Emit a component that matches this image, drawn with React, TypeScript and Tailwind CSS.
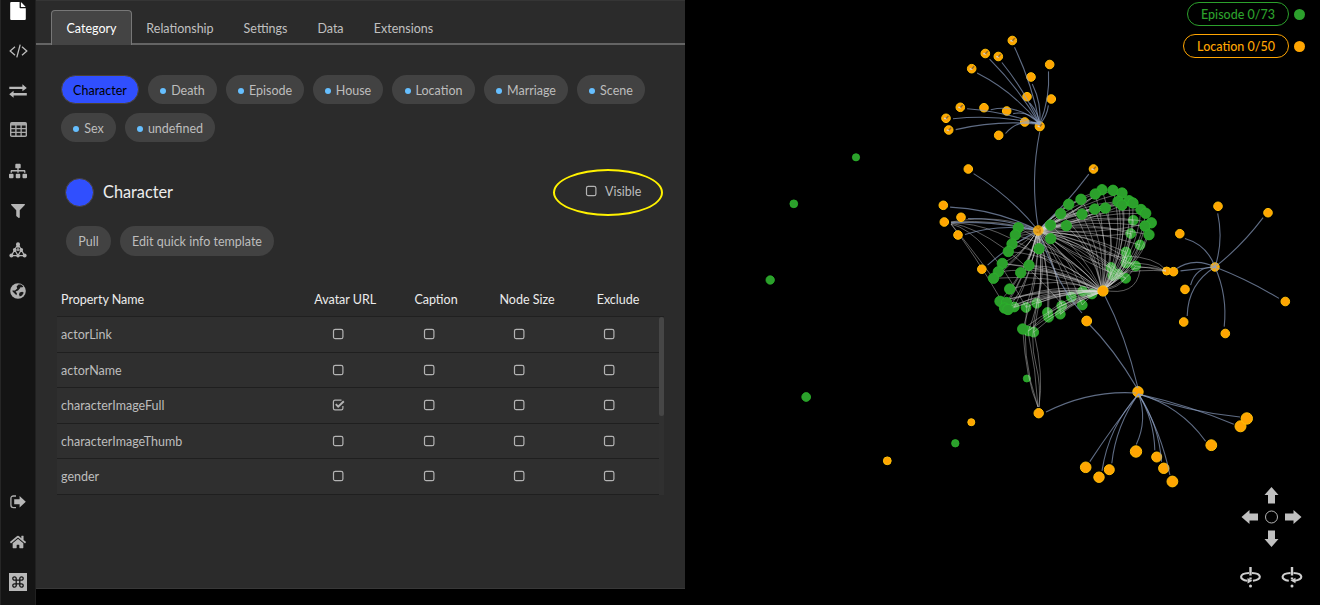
import type { ReactNode } from 'react';
import { FaFilter, FaHome, FaSitemap } from 'react-icons/fa';

type Point = [number, number];
type Node = [number, number, number];

const HUB_NORTH: Point = [1039.7, 126.3];
const HUB_A: Point = [1038.3, 230.5];
const HUB_B: Point = [1103, 291];
const HUB_EAST: Point = [1215, 267];
const HUB_SOUTH: Point = [1138, 391.8];

/* Episode nodes that sit in front of the links */
const episodesFront: Point[] = [
  [1102, 189.7], [1113, 190.3], [1122, 193], [1095.3, 194], [1081, 199.3], [1068.7, 204.3],
  [1118, 201.5], [1129, 200.7], [1133, 203], [1122, 205], [1141, 209.5], [1145.7, 213.3],
  [1151.3, 222.8], [1145, 226], [1149, 234.7], [1105.3, 208], [1094.7, 209], [1082, 214.2],
  [1060.7, 213.7], [1050.5, 225], [1066.3, 225.7], [1050.7, 238.6], [1039, 248.7],
  [1018.3, 227.8], [1015.3, 235], [1012, 244], [1008.3, 251.5], [1002.3, 263.5],
  [998.3, 271.8], [993.5, 278.3], [1029, 265.2], [1020.7, 272.7], [1009.7, 289],
  [1000, 301.3], [1006.5, 302.5], [1004.5, 308], [1008, 309.5], [1022.7, 329],
];

/* Episode nodes with links running across them */
const episodesBack: Point[] = [
  [1133.3, 220.3], [1130.7, 233.5], [1140, 245], [1126, 252], [1127, 258], [1126, 263],
  [1135.7, 266], [1111, 267.5], [1112.7, 275.5], [1118, 274], [1125.7, 278.3], [1014.3, 307],
  [1026, 307.5], [1036.7, 303.3], [1047.5, 312.5], [1048.5, 317.3], [1060.3, 314.2],
  [1061.7, 305.7], [1071.3, 297], [1082.7, 291.3], [1082.3, 305], [1092, 294],
  [1028.3, 331], [1033.7, 332.2],
];

const northLeaves: Point[] = [
  [1012.3, 40.5], [985.3, 53.5], [998.3, 56.5], [971.7, 68.7], [1049.7, 64.5], [1031, 77],
  [1027, 96.7], [1051.3, 99], [960.3, 107.3], [984, 107.7], [1006.7, 111], [946, 118.3],
  [948.7, 130], [998.7, 135.3], [1024.7, 122],
];
const northBend = [0.03, 0.03, 0.03, 0.05, 0.05, 0.06, 0.06, 0.06, 0.03, 0.12, 0.13, 0.04, 0.04, 0.14, 0.08];

const westLeaves: Point[] = [[968.3, 169], [1093.5, 169], [943.3, 205.3], [961, 217.3], [944.3, 222], [958, 235], [981.8, 269.2]];
const westBend = [0.04, 0.02, 0.05, 0.04, 0.03, 0.06, 0.03];

const eastLeaves: Point[] = [[1218, 206.3], [1268, 212.7], [1179.8, 233.7], [1173.5, 271.7], [1166.7, 271], [1185, 289.4], [1183.7, 322], [1225.3, 333.5], [1285.3, 301.5]];
const eastBend = [0.06, 0.03, 0.11, 0, 0.13, 0.16, 0.12, -0.06, -0.02];

const southLeaves: Node[] = [
  [1085.7, 467.3, 5.3], [1099, 477.2, 5.2], [1109.3, 469.7, 5], [1136, 451.5, 5.7], [1156.7, 457, 5],
  [1163.8, 468.3, 5.2], [1172.4, 481.5, 5.4], [1211.3, 445.2, 5.4], [1240.5, 426.3, 5.5], [1246.8, 418.5, 5.7],
];
const southBend = [0.01, 0.07, 0.06, -0.09, -0.06, -0.06, -0.04, -0.08, -0.02, 0.03];

const curve = (from: Point, to: Point, bend: number, gap = 0): string => {
  const dx = to[0] - from[0];
  const dy = to[1] - from[1];
  const len = Math.hypot(dx, dy) || 1;
  const ex = to[0] - (dx / len) * gap;
  const ey = to[1] - (dy / len) * gap;
  const cx = (from[0] + ex) / 2 - dy * bend * 2;
  const cy = (from[1] + ey) / 2 + dx * bend * 2;
  return `M${from[0]} ${from[1]}Q${cx.toFixed(1)} ${cy.toFixed(1)} ${ex.toFixed(1)} ${ey.toFixed(1)}`;
};

const Green = ({ x, y, r = 5.2 }: { x: number; y: number; r?: number }) => (
  <circle cx={x} cy={y} r={r} fill="#2ca02c" stroke="#2bb52b" strokeWidth="0.8" />
);
const Orange = ({ x, y, r = 4.3 }: { x: number; y: number; r?: number }) => (
  <circle cx={x} cy={y} r={r} fill="#ffa502" stroke="#ffc107" strokeWidth="1" />
);

const Arrow = ({ angle }: { angle: number }) => (
  <path
    d="M0 -30L7 -22H3.5V-13.5H-3.5V-22H-7Z"
    fill="#c0c0c0"
    transform={`translate(1271.5 517) rotate(${angle})`}
  />
);

const Rotate = ({ x, flip }: { x: number; flip?: boolean }) => (
  <g transform={`translate(${x} 577)`} stroke="#cfcfcf" fill="none">
    <path d="M0 -10V-1.5M0 0.5V2.5" strokeWidth="2.4" />
    <path d="M-3.2 3.7C-12 2.6 -11.5 -3.6 -1.5 -4M1.5 -4C11.5 -3.6 12 2.8 2.5 3.8" strokeWidth="2.1" />
    <path d={flip ? 'M-3 1L2 3.7L-3 6.4Z' : 'M3.5 0.8L-1.5 3.6L3.5 6.2Z'} fill="#cfcfcf" stroke="none" />
    <circle cx="0" cy="9" r="1.5" fill="#cfcfcf" stroke="none" />
  </g>
);

function Graph() {
  const episodes = [...episodesFront, ...episodesBack];
  return (
    <svg className="block h-[605px] w-[635px]" viewBox="685 0 635 605">
      {episodesBack.map(([x, y]) => (
        <Green key={`${x}-${y}`} x={x} y={y} r={4.9} />
      ))}
      <Green x={1026.8} y={378.5} r={3.5} />
      {northLeaves.map(([x, y]) => (
        <Orange key={`${x}-${y}`} x={x} y={y} />
      ))}
      <Orange x={HUB_NORTH[0]} y={HUB_NORTH[1]} r={4.6} />
      <Orange x={1166.7} y={271} r={4} />
      <Orange x={HUB_EAST[0]} y={HUB_EAST[1]} r={4.2} />
      <Orange x={HUB_SOUTH[0]} y={HUB_SOUTH[1]} r={5.2} />
      {southLeaves.map(([x, y, r]) => (
        <Orange key={`${x}-${y}`} x={x} y={y} r={r} />
      ))}

      <g fill="none" stroke="#d8d8d8" strokeOpacity="0.42" strokeWidth="1">
        {episodes.map((p, i) => (
          <path key={`a${i}`} d={curve(p, HUB_A, i % 3 === 0 ? 0.07 : 0.045, 3)} />
        ))}
        {episodes.map((p, i) => (
          <path key={`b${i}`} d={curve(p, HUB_B, p[0] > 1105 ? -0.09 : i % 2 === 0 ? -0.08 : -0.05, 3)} />
        ))}
        {episodes
          .filter((_, i) => i % 3 === 0)
          .map((p, i) => (
            <path key={`c${i}`} d={curve(p, p[1] > 262 && p[0] < 1090 ? HUB_B : HUB_A, -0.04, 3)} />
          ))}
        <path d="M951 224Q985 232 1026 307M951 224Q975 255 1000 298M951 223Q995 222 1050 263M951 223Q1000 232 1062 304M951 224Q965 240 993 278M951 222Q1000 213 1038 230M951 222Q1000 219 1038 231" />
        <path d="M1103 290Q1130 258 1166 271M1126 263Q1150 262 1166 271M1136 266Q1150 268 1166 271M1126 256Q1155 257 1166 270M1118 274Q1140 269 1166 271M1103 290Q1136 297 1140 270" />
        <path d="M1022.7 329Q1026 380 1038 407M1028 331Q1036 370 1038 407M1034 332Q1044 375 1039 407M1027 305Q1020 355 1038 407M1037 304Q1029 340 1036 365Q1041 385 1039 407" />
      </g>

      <g fill="none" stroke="#90a4c8" strokeOpacity="0.66" strokeWidth="1.1">
        {northLeaves.map((p, i) => (
          <path key={`n${i}`} d={curve([HUB_NORTH[0], HUB_NORTH[1] - 2], p, northBend[i], 7)} />
        ))}
        <path d="M1039.7 132Q1030 180 1038.3 228" />
        {westLeaves.map((p, i) => (
          <path key={`w${i}`} d={curve(HUB_A, p, westBend[i], 7)} />
        ))}
        {eastLeaves.map((p, i) => (
          <path key={`e${i}`} d={curve(HUB_EAST, p, eastBend[i], 7)} />
        ))}
        {southLeaves.map(([x, y], i) => (
          <path key={`s${i}`} d={curve([1138.5, 394], [x, y], southBend[i], 7)} />
        ))}
        <path d="M1136 393Q1090 390 1046 412" />
        <path d="M1038 230Q1057 285 1082 313M1088 323Q1114 349 1137 388M1104 294Q1126 336 1138 388" />
      </g>

      <g opacity="0.8">
        <Orange x={HUB_A[0]} y={HUB_A[1]} r={4.8} />
      </g>
      {episodesFront.map(([x, y]) => (
        <Green key={`${x}-${y}`} x={x} y={y} />
      ))}
      {[...westLeaves, ...eastLeaves.filter((p) => p[0] !== 1166.7)].map(([x, y]) => (
        <Orange key={`${x}-${y}`} x={x} y={y} />
      ))}
      <g fill="none" strokeWidth="1.4">
        {[...northLeaves.slice(0, 4), northLeaves[8], northLeaves[11], northLeaves[12], westLeaves[1], HUB_NORTH].map(([x, y]) => (
          <g key={`t${x}`}>
            <path d={`M${x - 2} ${y}L${x + 0.8} ${y + 0.6}`} stroke="#d8d2c4" />
            <path d={`M${x + 0.2} ${y + 0.2}L${x + 2.4} ${y - 2.4}`} stroke="#8d6a2e" />
          </g>
        ))}
      </g>
      <Orange x={HUB_B[0]} y={HUB_B[1]} r={5.1} />
      <Orange x={1086.7} y={321} r={4.9} />
      <Orange x={1038.7} y={413.2} r={4.7} />
      <Orange x={971.3} y={422.2} r={3.5} />
      <Orange x={887.3} y={460.8} r={3.9} />
      <Green x={856} y={157.3} r={3.6} />
      <Green x={793.8} y={203.8} r={3.9} />
      <Green x={770.2} y={280} r={4.2} />
      <Green x={806.2} y={397} r={4.4} />
      <Green x={955.3} y={443.3} r={3.7} />

      {[0, 90, 180, 270].map((a) => (
        <Arrow key={a} angle={a} />
      ))}
      <circle cx="1271.5" cy="517" r="6" fill="none" stroke="#b4b4b4" strokeWidth="1" />
      <Rotate x={1250.5} flip />
      <Rotate x={1292} />
    </svg>
  );
}

const FileIcon = () => (
  <svg className="h-[18px] w-[16px]" viewBox="0 0 16 18" fill="#fff">
    <path d="M1.2 0H9.6V5.4Q9.6 6.2 10.4 6.2H15.8V16.9Q15.8 18 14.7 18H1.3Q0.2 18 0.2 16.9V1Q0.2 0 1.2 0Z" />
    <path d="M10.9 0.2Q11.5 0.5 12 1L14.9 3.9Q15.4 4.4 15.6 5H10.9Z" />
  </svg>
);
const CodeIcon = () => (
  <svg className="h-[14px] w-[19px]" viewBox="0 0 19 14" fill="none" stroke="#bdbdbd" strokeWidth="1.3">
    <path d="M6 2.8L1.2 7L6 11.2M13 2.8L17.8 7L13 11.2M11.2 0.6L7.8 13.4" />
  </svg>
);
const ExchangeIcon = () => (
  <svg className="h-[14px] w-[18px]" viewBox="0 0 18 14" fill="#b9b9b9">
    <path d="M0.3 2.7H13.4V0.3L17.8 3.9L13.4 7.3V5H0.3ZM17.8 9.1H4.6V6.7L0.2 10.3L4.6 13.8V11.4H17.8Z" />
  </svg>
);
const TableIcon = () => (
  <svg className="mb-[3px] h-[15px] w-[17px]" viewBox="0 0 17 15">
    <rect width="17" height="15" rx="1.7" fill="#a9a9a9" />
    <g fill="#1a1a1a">
      <path d="M1.4 3.4H5.2V6H1.4ZM6.6 3.4H10.5V6H6.6ZM11.8 3.4H15.6V6H11.8ZM1.4 7.2H5.2V9.8H1.4ZM6.6 7.2H10.5V9.8H6.6ZM11.8 7.2H15.6V9.8H11.8ZM1.4 11H5.2V13.6H1.4ZM6.6 11H10.5V13.6H6.6ZM11.8 11H15.6V13.6H11.8Z" />
    </g>
  </svg>
);
const NetworkIcon = () => (
  <svg className="mb-[2px] h-[16px] w-[18px]" viewBox="0 0 18 16" fill="#b5b5b5">
    <path d="M9 2L2.4 13.6H15.6ZM5.8 8L9 13.6L12.2 8ZM9 2V9" fill="none" stroke="#b5b5b5" strokeWidth="1.2" />
    <circle cx="9" cy="2.2" r="2" />
    <circle cx="2.4" cy="13.6" r="2" />
    <circle cx="15.6" cy="13.6" r="2" />
    <circle cx="9" cy="13.8" r="1.7" />
    <circle cx="5.6" cy="7.8" r="1.7" />
    <circle cx="12.4" cy="7.8" r="1.7" />
  </svg>
);
const GlobeIcon = () => (
  <svg className="h-[16px] w-[16px]" viewBox="0 0 16 16">
    <circle cx="8" cy="8" r="7.8" fill="#b0b0b0" />
    <path d="M8.5 1.6L11 1.6L13.4 3.6L12 4.4L10.8 4L9.8 5.6L8 7.4L5.6 8.4L7 10.4L6.4 12.2L4.6 10.6L2.6 8.6L2.4 7.4L5 7.4L7.2 5.4L6.6 3.6ZM9.6 9.4L12.2 8.8L13.8 9.8L12 12.6L9.8 13.6L9 11.5Z" fill="#191919" />
  </svg>
);
const SignOutIcon = () => (
  <svg className="h-[14px] w-[16px]" viewBox="0 0 16 14">
    <path d="M6 1H3.4Q0.9 1 0.9 3.5V10Q0.9 12.6 3.4 12.6H6" fill="none" stroke="#b0b0b0" strokeWidth="1.3" />
    <path d="M4.2 4.3H9.6V1L15.8 6.8L9.6 12.6V9.3H4.2Z" fill="#b8b8b8" />
  </svg>
);
const CommandIcon = () => (
  <svg className="h-[18px] w-[18px]" viewBox="0 0 18 18">
    <rect width="18" height="18" fill="#b8b8b8" />
    <path d="M7.2 7.2H5.6A1.7 1.7 0 1 1 7.2 5.6V12.4A1.7 1.7 0 1 1 5.6 10.8H12.4A1.7 1.7 0 1 1 10.8 12.4V5.6A1.7 1.7 0 1 1 12.4 7.2Z" fill="none" stroke="#151515" strokeWidth="1.3" />
  </svg>
);

const Slot = ({ children }: { children: ReactNode }) => (
  <div className="flex h-10 w-full shrink-0 items-center justify-center">{children}</div>
);

function Sidebar() {
  return (
    <nav className="flex h-[605px] w-9 shrink-0 flex-col justify-between overflow-hidden border-r border-l border-r-[#202020] border-l-[#262626] bg-[#141414] pb-[3px] text-[#b5b5b5]">
      <div className="-mt-[9px]">
        <Slot><FileIcon /></Slot>
        <Slot><CodeIcon /></Slot>
        <Slot><ExchangeIcon /></Slot>
        <Slot><TableIcon /></Slot>
        <Slot><FaSitemap size={18} /></Slot>
        <Slot><FaFilter size={14} /></Slot>
        <Slot><NetworkIcon /></Slot>
        <Slot><GlobeIcon /></Slot>
      </div>
      <div className="pr-[1px]">
        <Slot><SignOutIcon /></Slot>
        <Slot><FaHome size={16} /></Slot>
        <Slot><CommandIcon /></Slot>
      </div>
    </nav>
  );
}

const Checkbox = ({ checked }: { checked?: boolean }) => (
  <svg className="block h-3 w-[13px]" viewBox="0 0 13 12" fill="none" stroke="#b3b3b3">
    {checked ? (
      <>
        <path d="M10.9 7V9.3Q10.9 10.9 9.3 10.9H3Q1.4 10.9 1.4 9.3V2.9Q1.4 1.2 3 1.2H9.5" strokeWidth="1.2" />
        <path d="M3.8 5.2L6.2 7.7L11.8 2.2" strokeWidth="1.9" />
      </>
    ) : (
      <rect x="1.5" y="1.3" width="9.4" height="9.4" rx="1.8" strokeWidth="1.2" />
    )}
  </svg>
);

const Tab = ({ width, children }: { width: string; children: string }) => (
  <div className={`${width} flex h-[34px] items-center justify-center pt-[5px] text-[#c0c0c0]`}>{children}</div>
);

const Pill = ({ width, children }: { width: string; children: string }) => (
  <button className={`${width} flex h-[29px] items-center justify-center gap-[5px] rounded-full bg-[#424242] pt-[2px] text-[#bdbdbd]`}>
    <span className="size-[6px] rounded-full bg-[#66bfff]" />
    {children}
  </button>
);

const rows = [
  { name: 'actorLink' },
  { name: 'actorName' },
  { name: 'characterImageFull', avatar: true },
  { name: 'characterImageThumb' },
  { name: 'gender' },
];

function Panel() {
  return (
    <main className="flex h-[589px] w-[649px] shrink-0 flex-col border-t border-b border-t-[#353535] border-b-[#383838] bg-[#2b2b2b]">
      <div className="flex h-[44px] items-end border-b-2 border-[#646464] pl-[15px]">
        <div className="-mb-[2px] flex h-[35px] w-[81px] items-center justify-center rounded-t border border-b-0 border-[#777] bg-[#444] pt-[2px] text-white">
          Category
        </div>
        <Tab width="w-[96px]">Relationship</Tab>
        <Tab width="w-[75px]">Settings</Tab>
        <Tab width="w-[55px]">Data</Tab>
        <Tab width="w-[91px]">Extensions</Tab>
      </div>

      <div className="mt-[30px] ml-[25px] flex w-[600px] flex-wrap gap-x-[9px] gap-y-[9px]">
        <button className="flex h-[29px] w-[78px] items-center justify-center rounded-full border border-[#4a4233] bg-[#304ffe] pt-[2px] text-black">
          Character
        </button>
        <Pill width="w-[69px]">Death</Pill>
        <Pill width="w-[78px]">Episode</Pill>
        <Pill width="w-[70px]">House</Pill>
        <Pill width="w-[83px]">Location</Pill>
        <Pill width="w-[84px]">Marriage</Pill>
        <Pill width="w-[68px]">Scene</Pill>
        <Pill width="w-[55px]">Sex</Pill>
        <Pill width="w-[90px]">undefined</Pill>
      </div>

      <div className="mt-[27px] flex h-[47px] items-center justify-between pr-[22px] pl-[29px]">
        <div className="flex items-center gap-[9px] pb-[1px]">
          <span className="size-[29px] rounded-full border border-[#4a4233] bg-[#304ffe]" />
          <span className="text-[16.3px] text-[#ededed]">Character</span>
        </div>
        <div className="flex h-[47px] w-[110px] items-center gap-[7px] rounded-[50%] border-2 border-[#fff200] pb-[3px] pl-[30px] text-[#bdbdbd]">
          <Checkbox />
          <span className="pt-[2px]">Visible</span>
        </div>
      </div>

      <div className="mt-[10px] ml-[30px] flex gap-[9px] text-[#bdbdbd]">
        <button className="h-[30px] w-[45px] rounded-full bg-[#424242] pt-[2px]">Pull</button>
        <button className="h-[30px] w-[154px] rounded-full bg-[#424242] pt-[2px]">Edit quick info template</button>
      </div>

      <div className="mt-[28px] ml-[21px] flex h-[32px] w-[607px] items-center text-[#ececec]">
        <span className="w-[243px] pl-1">Property Name</span>
        <span className="w-[90.5px] text-center">Avatar URL</span>
        <span className="w-[91px] text-center">Caption</span>
        <span className="w-[91px] text-center">Node Size</span>
        <span className="w-[91px] text-center">Exclude</span>
      </div>
      <div className="ml-[21px] flex w-[607px] border-t border-[#202020]">
        <div className="w-[602px]">
          {rows.map((row) => (
            <div key={row.name} className="flex h-[35.5px] items-center border-b border-[#1f1f1f] bg-[#2f2f2f] text-[#bdbdbd]">
              <span className="w-[236.6px] pt-[2px] pl-1">{row.name}</span>
              <span className="flex w-[90.3px] justify-center"><Checkbox checked={row.avatar} /></span>
              <span className="flex w-[90.3px] justify-center"><Checkbox /></span>
              <span className="flex w-[90.3px] justify-center"><Checkbox /></span>
              <span className="flex w-[90.3px] justify-center"><Checkbox /></span>
            </div>
          ))}
        </div>
        <div className="w-[5px] bg-[#303030]">
          <div className="h-[99px] rounded-full bg-[#464646]" />
        </div>
      </div>
    </main>
  );
}

export default function App() {
  return (
    <div className="flex h-[605px] w-[1320px] overflow-hidden bg-black font-[Lato,sans-serif] text-[12.5px] leading-[18px]">
      <Sidebar />
      <Panel />
      <section className="relative w-[635px] shrink-0 bg-black">
        <Graph />
        <div className="absolute top-[2px] right-[15px] flex flex-col items-end gap-2">
          <div className="flex items-center gap-[5px]">
            <span className="flex h-6 w-[102px] items-center justify-center rounded-full border border-[#2ca02c] pt-[2px] font-medium text-[#2ca02c]">Episode 0/73</span>
            <span className="size-[11px] rounded-full bg-[#2ca02c]" />
          </div>
          <div className="flex items-center gap-[5px]">
            <span className="flex h-6 w-[106px] items-center justify-center rounded-full border border-[#ffa502] pt-[2px] font-medium text-[#ffa502]">Location 0/50</span>
            <span className="size-[11px] rounded-full bg-[#ffa502]" />
          </div>
        </div>
      </section>
    </div>
  );
}
